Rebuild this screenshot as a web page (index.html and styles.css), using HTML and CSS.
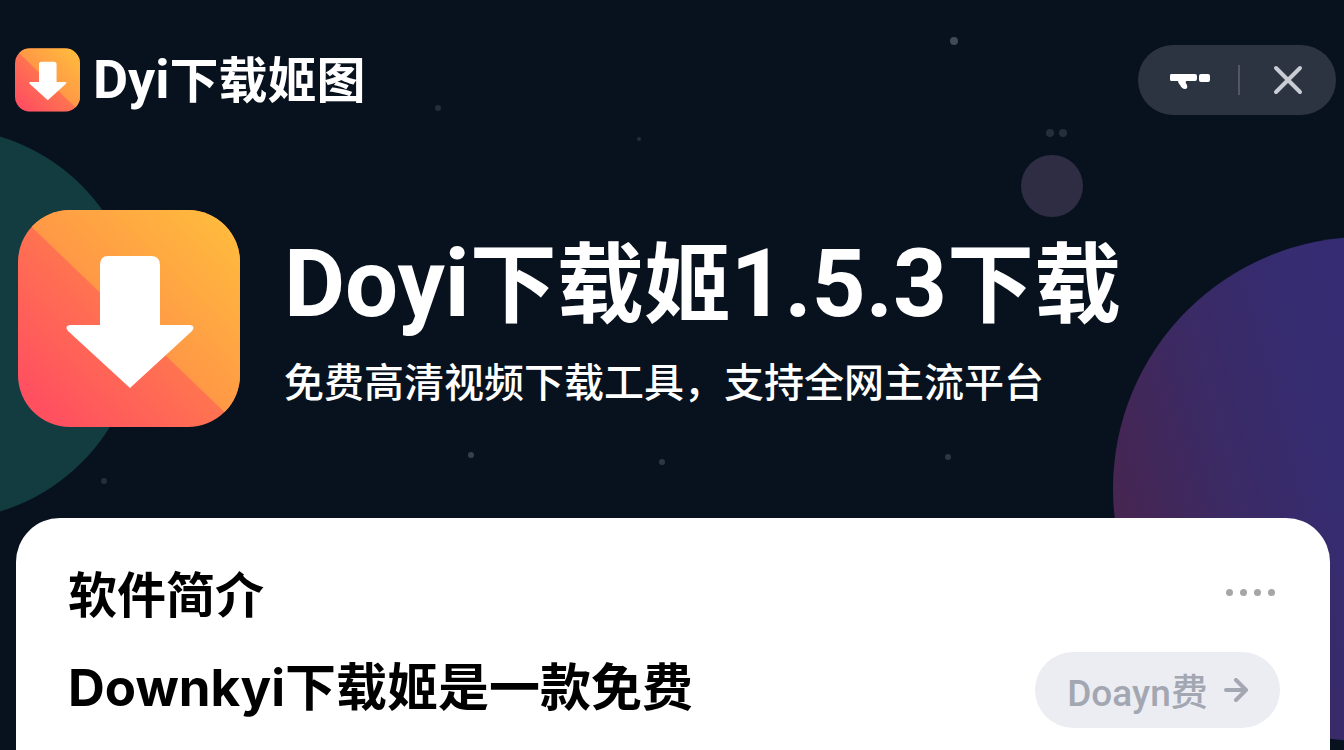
FILE: index.html
```html
<!DOCTYPE html>
<html lang="zh-CN">
  <head>
    <meta charset="UTF-8">
    <meta name="viewport" content="width=device-width, initial-scale=1">
    <title>Doyi下载姬1.5.3下载</title>
    <link rel="stylesheet" href="styles.css">
  </head>
  <body>
    <!-- gradient and shape shared by both logos -->
    <svg class="defs" width="0" height="0" aria-hidden="true">
      <defs>
        <linearGradient id="warm" x1="0" y1="1" x2="1" y2="0">
          <stop offset=".1" stop-color="#ff5060"/>
          <stop offset=".5" stop-color="#ff7450"/>
          <stop offset="1" stop-color="#ff9a40"/>
        </linearGradient>
        <linearGradient id="light" x1="0" y1="1" x2="1" y2="0">
          <stop offset=".4" stop-color="#ff9048"/>
          <stop offset="1" stop-color="#ffbf3c"/>
        </linearGradient>
        <clipPath id="tile"><rect width="222" height="217" rx="52"/></clipPath>
        <symbol id="logo" viewBox="0 0 222 217">
          <g clip-path="url(#tile)">
            <path fill="url(#warm)" d="M0 0h222v217H0z"/>
            <path fill="url(#light)" d="M-4 0H222V217z"/>
            <path fill="#fff" d="M90 46h43q9 0 9 9v60h30q6 1 2 6l-62 57-62-57q-4-5 2-6h30V55q0-9 8-9z"/>
          </g>
        </symbol>
      </defs>
    </svg>

    <div class="page">
      <div class="decor" aria-hidden="true">
        <span class="circle teal"></span>
        <span class="circle purple"></span>
        <span class="circle grey"></span>
        <svg class="stars" width="1344" height="520" fill="#66707c">
          <circle cx="954" cy="41" r="4" opacity=".6"/>
          <circle cx="1050" cy="133" r="4" opacity=".3"/>
          <circle cx="1063" cy="133" r="4" opacity=".3"/>
          <circle cx="438" cy="108" r="3" opacity=".3"/>
          <circle cx="639" cy="139" r="2" opacity=".3"/>
          <circle cx="471" cy="455" r="3" opacity=".5"/>
          <circle cx="662" cy="462" r="3" opacity=".4"/>
          <circle cx="948" cy="457" r="3" opacity=".4"/>
          <circle cx="104" cy="481" r="3" opacity=".3"/>
        </svg>
      </div>

      <header class="topbar">
        <a class="brand" href="#">
          <svg class="brand-logo"><use href="#logo"/></svg>
          <span class="brand-name"><span class="latin">Dyi</span>下载姬图</span>
        </a>
        <div class="capsule">
          <button type="button" aria-label="菜单">
            <svg width="42" height="18" viewBox="0 0 42 18" fill="#fff">
              <path d="M2 3h24q2 0 2 2v3q0 2-2 2h-9q-1 2 1 4 1 4-2 4-3 0-5-4-2-2-2-4H2q-1 0-1-2V5q0-2 1-2z"/>
              <rect x="30" y="3" width="11" height="8" rx="2"/>
            </svg>
          </button>
          <span class="divider"></span>
          <button type="button" aria-label="关闭">
            <svg width="30" height="30" viewBox="0 0 30 30" fill="none" stroke="#c9ccd2" stroke-width="4" stroke-linecap="round">
              <path d="M3 3l24 24M27 3L3 27"/>
            </svg>
          </button>
        </div>
      </header>

      <section class="hero">
        <svg class="hero-logo"><use href="#logo"/></svg>
        <div class="hero-text">
          <h1><span class="latin">Doyi</span>下载姬<span class="latin">1.5.3</span>下载</h1>
          <p>免费高清视频下载工具，支持全网主流平台</p>
        </div>
      </section>

      <main class="card">
        <div class="row">
          <h2>软件简介</h2>
          <button class="more" type="button" aria-label="更多"><i></i><i></i><i></i><i></i></button>
        </div>
        <div class="row">
          <h3>Downkyi下载姬是一款免费</h3>
          <button class="btn" type="button">
            Doayn费
            <svg width="24" height="24" viewBox="0 0 24 24" fill="none" stroke="currentColor" stroke-width="4" stroke-linecap="round" stroke-linejoin="round">
              <path d="M2 12h19M12 2l10 10-10 10"/>
            </svg>
          </button>
        </div>
      </main>
    </div>
  </body>
</html>
```
FILE: styles.css
```css
*, ::after, ::before {
  box-sizing: border-box;
}

body {
  margin: 0;
  background: #08121e;
  color: #fff;
  font-family: Roboto, "Noto Sans CJK SC", sans-serif;
}

h1, h2, h3, p {
  margin: 0;
}

button {
  display: flex;
  align-items: center;
  justify-content: center;
  padding: 0;
  border: 0;
  background: none;
  font-family: inherit;
  cursor: pointer;
}

.defs {
  position: absolute;
}

.page {
  position: relative;
  display: flex;
  flex-direction: column;
  min-height: 100vh;
  padding: 44px 14px 0 15px;
  overflow: hidden;
}

/* background shapes */
.decor {
  position: absolute;
  inset: 0;
}

.circle {
  position: absolute;
  border-radius: 50%;
}

.teal {
  left: -253px;
  top: 128px;
  width: 392px;
  height: 392px;
  background: #123c40;
}

.purple {
  right: -273px;
  top: 237px;
  width: 504px;
  height: 504px;
  background: linear-gradient(75deg, #48254f 8%, #3b2a64 28%, #352c72 48%, #352c78);
}

.grey {
  right: 261px;
  top: 155px;
  width: 62px;
  height: 62px;
  background: #2f2d43;
}

.stars {
  display: block;
}

/* top bar */
.topbar {
  position: relative;
  display: flex;
  align-items: center;
  justify-content: space-between;
  height: 72px;
  margin-right: -6px;
}

.brand {
  display: flex;
  align-items: center;
  gap: 13px;
  color: #fff;
  font-size: 49px;
  font-weight: 700;
  line-height: 72px;
  text-decoration: none;
}

.brand-logo {
  width: 65px;
  height: 64px;
}

.brand-name {
  padding-top: 2px;
}

/* latin letters are set larger than the chinese ones */
.brand-name .latin {
  font-size: 54px;
}

.capsule {
  display: flex;
  align-items: center;
  width: 198px;
  height: 70px;
  padding-left: 4px;
  border-radius: 35px;
  background: #2d3441;
}

.capsule button {
  flex: 1;
  height: 70px;
}

.divider {
  width: 2px;
  height: 30px;
  background: #525762;
}

/* hero */
.hero {
  position: relative;
  display: flex;
  gap: 44px;
  height: 217px;
  margin-top: 94px;
  padding-left: 3px;
}

.hero-logo {
  flex: none;
  width: 222px;
  height: 217px;
}

.hero-text {
  padding-top: 24px;
  white-space: nowrap;
}

h1 {
  font-size: 87px;
  font-weight: 700;
  line-height: 100px;
}

h1 .latin {
  font-size: 94px;
}

.hero p {
  font-size: 40px;
  font-weight: 500;
  line-height: 96px;
}

/* card */
.card {
  position: relative;
  flex: 1;
  margin-top: 91px;
  margin-left: 1px;
  padding: 44px 50px 0 52px;
  border-radius: 44px 44px 0 0;
  background: #fff;
  color: #000;
}

.row {
  display: flex;
  align-items: center;
  justify-content: space-between;
}

h2 {
  font-size: 49px;
  font-weight: 700;
  line-height: 70px;
}

h3 {
  font-family: Inter, "Noto Sans CJK SC", sans-serif;
  font-size: 51px;
  font-weight: 700;
  line-height: 72px;
}

.row + .row {
  align-items: flex-start;
  margin-top: 20px;
}

.more {
  gap: 7px;
  height: 40px;
  padding: 0 5px 10px 0;
}

.more i {
  width: 7px;
  height: 7px;
  border-radius: 50%;
  background: #a6a6a6;
}

.btn {
  gap: 16px;
  width: 245px;
  height: 76px;
  border-radius: 38px;
  background: #ebedf3;
  color: #a3a7b1;
  font-size: 37px;
  font-weight: 500;
}
```
